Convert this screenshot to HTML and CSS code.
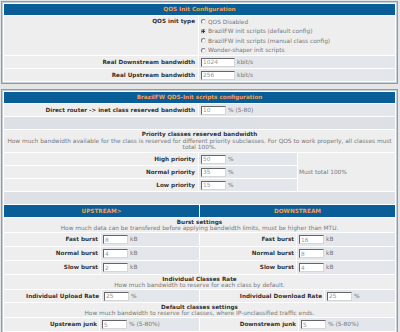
FILE: index.html
```html
<!doctype html>
<html lang="en">
<head>
<meta charset="utf-8">
<title>QOS Init Configuration</title>
<meta name="viewport" content="width=device-width, initial-scale=1">
<link rel="stylesheet" href="styles.css">
</head>
<body>

<section class="panel">
  <div class="head">QOS Init Configuration</div>
  <div class="row tall">
    <div class="lbl top">QOS init type</div>
    <div class="val radios">
      <label><input type="radio" name="qos"> QOS Disabled</label>
      <label><input type="radio" name="qos" checked> BrazilFW init scripts (default config)</label>
      <label><input type="radio" name="qos"> BrazilFW init scripts (manual class config)</label>
      <label><input type="radio" name="qos"> Wonder-shaper init scripts</label>
    </div>
  </div>
  <div class="row">
    <div class="lbl">Real Downstream bandwidth</div>
    <div class="val"><input class="wide" value="1024"> kbit/s</div>
  </div>
  <div class="row">
    <div class="lbl">Real Upstream bandwidth</div>
    <div class="val"><input class="wide" value="256"> kbit/s</div>
  </div>
</section>

<section class="panel">
  <div class="head">BrazilFW QDS-Init scripts configuration</div>
  <div class="row">
    <div class="lbl">Direct router -&gt; inet class reserved bandwidth</div>
    <div class="val"><input value="10"> % (5-80)</div>
  </div>
  <div class="empty"></div>
  <div class="note three">
    <b>Priority classes reserved bandwidth</b>
    How much bandwidth available for the class is reserved for different priority subclasses. For QOS to work properly, all classes must total 100%.
  </div>
  <div class="prio">
    <div class="lbl">High priority</div>
    <div class="val"><input value="50"> %</div>
    <div class="must">Must total 100%</div>
    <div class="lbl">Normal priority</div>
    <div class="val"><input value="35"> %</div>
    <div class="lbl">Low priority</div>
    <div class="val"><input value="15"> %</div>
  </div>
  <div class="empty"></div>

  <div class="halves">
    <div class="head">UPSTREAM&gt;</div>
    <div class="head">DOWNSTREAM</div>
  </div>

  <div class="note">
    <b>Burst settings</b>
    How much data can be transfered before applying bandwidth limits, must be higher than MTU.
  </div>
  <div class="halves">
    <div class="half">
      <div class="lbl">Fast burst</div><div class="val"><input value="8"> kB</div>
      <div class="lbl">Normal burst</div><div class="val"><input value="4"> kB</div>
      <div class="lbl">Slow burst</div><div class="val"><input value="2"> kB</div>
    </div>
    <div class="half">
      <div class="lbl">Fast burst</div><div class="val"><input value="16"> kB</div>
      <div class="lbl">Normal burst</div><div class="val"><input value="8"> kB</div>
      <div class="lbl">Slow burst</div><div class="val"><input value="4"> kB</div>
    </div>
  </div>

  <div class="note">
    <b>Individual Classes Rate</b>
    How much bandwidth to reserve for each class by default.
  </div>
  <div class="halves">
    <div class="half rate-up">
      <div class="lbl">Individual Upload Rate</div><div class="val"><input value="25"> %</div>
    </div>
    <div class="half rate-down">
      <div class="lbl">Individual Download Rate</div><div class="val"><input value="25"> %</div>
    </div>
  </div>

  <div class="note">
    <b>Default classes settings</b>
    How much bandwidth to reserve for classes, where IP-unclassified traffic ends.
  </div>
  <div class="halves">
    <div class="half junk-up">
      <div class="lbl">Upstream junk</div><div class="val"><input value="5"> % (5-80%)</div>
    </div>
    <div class="half junk-down">
      <div class="lbl">Downstream junk</div><div class="val"><input value="5"> % (5-80%)</div>
    </div>
  </div>
</section>

</body>
</html>
```

FILE: styles.css
```css
:root{--blue:#0a5e98;--orange:#f2a04e;--cell:#eeeeee;--val:#e3e6ea;--dim:#dde1e6;}
body{margin:0;padding:1px;background:#e5e5e5;font:5.7px/6.5px "DejaVu Sans",Verdana,sans-serif;color:#333;}

/* panels */
.panel{width:397px;box-sizing:border-box;border:1px solid #8e9bab;box-shadow:inset 0 0 0 1px #c6ced7;padding:2px;background:#fff;display:flex;flex-direction:column;gap:1px;margin-bottom:5px;}
.head{background:var(--blue);color:var(--orange);font-weight:bold;text-align:center;height:11px;line-height:11px;}

/* label / value rows */
.row{display:grid;grid-template-columns:194px 1fr;gap:1px;height:12px;}
.row.tall{height:39px;}
.lbl{background:var(--cell);font-weight:bold;display:flex;align-items:center;justify-content:flex-end;padding-right:3px;white-space:nowrap;}
.lbl.top{align-items:flex-start;padding-top:2px;}
.val{background:var(--val);display:flex;align-items:center;gap:2px;padding-left:2px;color:#777;white-space:nowrap;font-size:5.85px;}
.radios{flex-direction:column;align-items:flex-start;justify-content:flex-start;padding-top:1px;background:var(--cell);gap:0;}
.radios label{display:flex;align-items:center;gap:2px;height:9.5px;}

/* form controls */
input{font:inherit;color:#999;width:25px;height:9px;box-sizing:border-box;margin:0;padding:0 1px;background:#fff;border:1px solid;border-color:#666 #d6d6d6 #d6d6d6 #666;}
input.wide{width:34px;}
input[type=radio]{appearance:none;width:5px;height:5px;padding:0;border-radius:50%;border-color:#777 #ddd #ddd #777;}
input[type=radio]:checked{background:radial-gradient(circle,#333 0 1px,#fff 1.2px);}

.empty{height:12px;background:var(--dim);}
.note{background:var(--cell);text-align:center;color:#777;padding:0.5px 0;font-size:5.85px;}
.note b{display:block;color:#333;font-size:5.7px;}
.note.three{padding:1px 0 1.5px;}

/* priority block */
.prio{display:grid;grid-template-columns:194px 98px 1fr;grid-template-rows:repeat(3,12px);gap:1px;}
.must{grid-column:3;grid-row:1/4;background:var(--cell);color:#777;display:flex;align-items:center;padding-left:1px;font-size:5.85px;}

/* upstream / downstream halves */
.halves{display:grid;grid-template-columns:1fr 1fr;gap:1px;}
.halves .head{height:12px;line-height:12px;}
.half{display:grid;grid-template-columns:96px 1fr;grid-auto-rows:13px;gap:1px;}
.half .lbl{padding-right:2px;}
.half.rate-up{grid-template-columns:97px 1fr;grid-auto-rows:12px;}
.half.rate-down{grid-template-columns:124px 1fr;grid-auto-rows:12px;}
.half.junk-up{grid-template-columns:95px 1fr;}
.half.junk-down{grid-template-columns:98px 1fr;}
```
